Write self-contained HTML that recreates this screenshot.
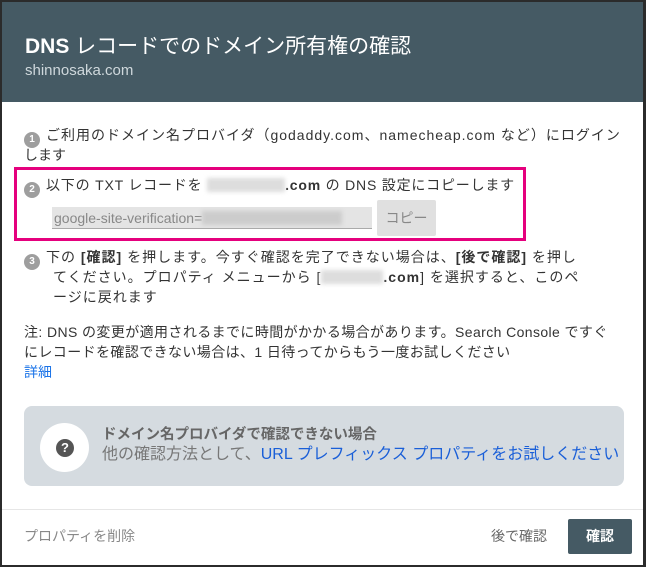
<!DOCTYPE html>
<html><head><meta charset="utf-8"><style>
*{margin:0;padding:0;box-sizing:border-box}
body{width:646px;height:567px;background:#2b2b2b;font-family:"Liberation Sans","Noto Sans CJK JP",sans-serif;overflow:hidden;position:relative}
.d{position:absolute;left:2px;top:2px;width:641px;height:563px;background:#fff}
.hd{position:absolute;left:0;top:0;width:641px;height:100px;background:#455a64}
.t{position:absolute;left:23px;top:28px;color:#fff;font-size:21px;white-space:nowrap}
.s{position:absolute;left:23px;top:60px;color:#cfd8dc;font-size:15px}
.p{position:absolute;font-size:14px;color:#333;white-space:nowrap;line-height:20px}
.n{display:inline-block;width:16px;height:16px;border-radius:50%;background:#9e9e9e;color:#fff;font-size:10px;text-align:center;line-height:16px;font-weight:bold;vertical-align:-2px;margin-right:6px;letter-spacing:0}
.blur{display:inline-block;background:#ddd;filter:blur(2px);height:14px;vertical-align:-2px}
.pink{position:absolute;left:12px;top:165px;width:512px;height:74px;border:3px solid #e5007d}
</style></head><body>
<div class="d">
<div class="hd"><div class="t"><b>DNS</b> レコードでのドメイン所有権の確認</div><div class="s">shinnosaka.com</div></div>
<div class="p" style="left:22px;top:123px;letter-spacing:1px"><span class="n">1</span>ご利用のドメイン名プロバイダ（godaddy.com、namecheap.com など）にログイン</div>
<div class="p" style="left:22px;top:143px">します</div>
<div class="pink"></div>
<div class="p" style="left:22px;top:173px;letter-spacing:0.8px"><span class="n">2</span>以下の TXT レコードを <span class="blur" style="width:78px"></span><b>.com</b> の DNS 設定にコピーします</div>
<div style="position:absolute;left:50px;top:205px;width:320px;height:22px;background:#e4e4e4;border-bottom:1px solid #aaa;color:#888;font-size:14px;line-height:22px;padding-left:2px;overflow:hidden;white-space:nowrap">google-site-verification=<span class="blur" style="width:140px;background:#ccc"></span></div>
<div style="position:absolute;left:375px;top:198px;width:59px;height:36px;background:#e0e0e0;border-radius:2px;color:#888;font-size:14px;text-align:center;line-height:36px">コピー</div>
<div class="p" style="left:22px;top:245px;letter-spacing:1px"><span class="n">3</span>下の <b>[確認]</b> を押します。今すぐ確認を完了できない場合は、<b>[後で確認]</b> を押し</div>
<div class="p" style="left:51px;top:265px;letter-spacing:1px">てください。プロパティ メニューから [<span class="blur" style="width:62px"></span><b>.com</b>] を選択すると、このペ</div>
<div class="p" style="left:51px;top:285px;letter-spacing:1px">ージに戻れます</div>
<div class="p" style="left:22px;top:320px;letter-spacing:0.4px">注: DNS の変更が適用されるまでに時間がかかる場合があります。Search Console ですぐ</div>
<div class="p" style="left:22px;top:340px;letter-spacing:0.4px">にレコードを確認できない場合は、1 日待ってからもう一度お試しください</div>
<div class="p" style="left:22px;top:360px;color:#1a73e8">詳細</div>
<div style="position:absolute;left:22px;top:404px;width:600px;height:80px;background:#d5dbe0;border-radius:8px"></div>
<div style="position:absolute;left:38px;top:421px;width:49px;height:49px;border-radius:50%;background:#fff"></div>
<div style="position:absolute;left:54px;top:437px;width:18px;height:18px;border-radius:50%;background:#555;color:#fff;font-size:13px;font-weight:bold;text-align:center;line-height:18px">?</div>
<div class="p" style="left:100px;top:423px;font-weight:bold;color:#666;font-size:14.5px">ドメイン名プロバイダで確認できない場合</div>
<div class="p" style="left:100px;top:443px;color:#777;font-size:16px">他の確認方法として、<span style="color:#1a5fd8">URL プレフィックス プロパティをお試しください</span></div>
<div style="position:absolute;left:0;top:507px;width:641px;border-top:1px solid #e6e6e6"></div>
<div class="p" style="left:22px;top:524px;color:#888">プロパティを削除</div>
<div class="p" style="left:489px;top:524px;color:#666">後で確認</div>
<div style="position:absolute;left:566px;top:517px;width:64px;height:35px;background:#455a64;border-radius:2px;color:#fff;font-size:14px;font-weight:bold;text-align:center;line-height:35px">確認</div>
</div>
</body></html>
